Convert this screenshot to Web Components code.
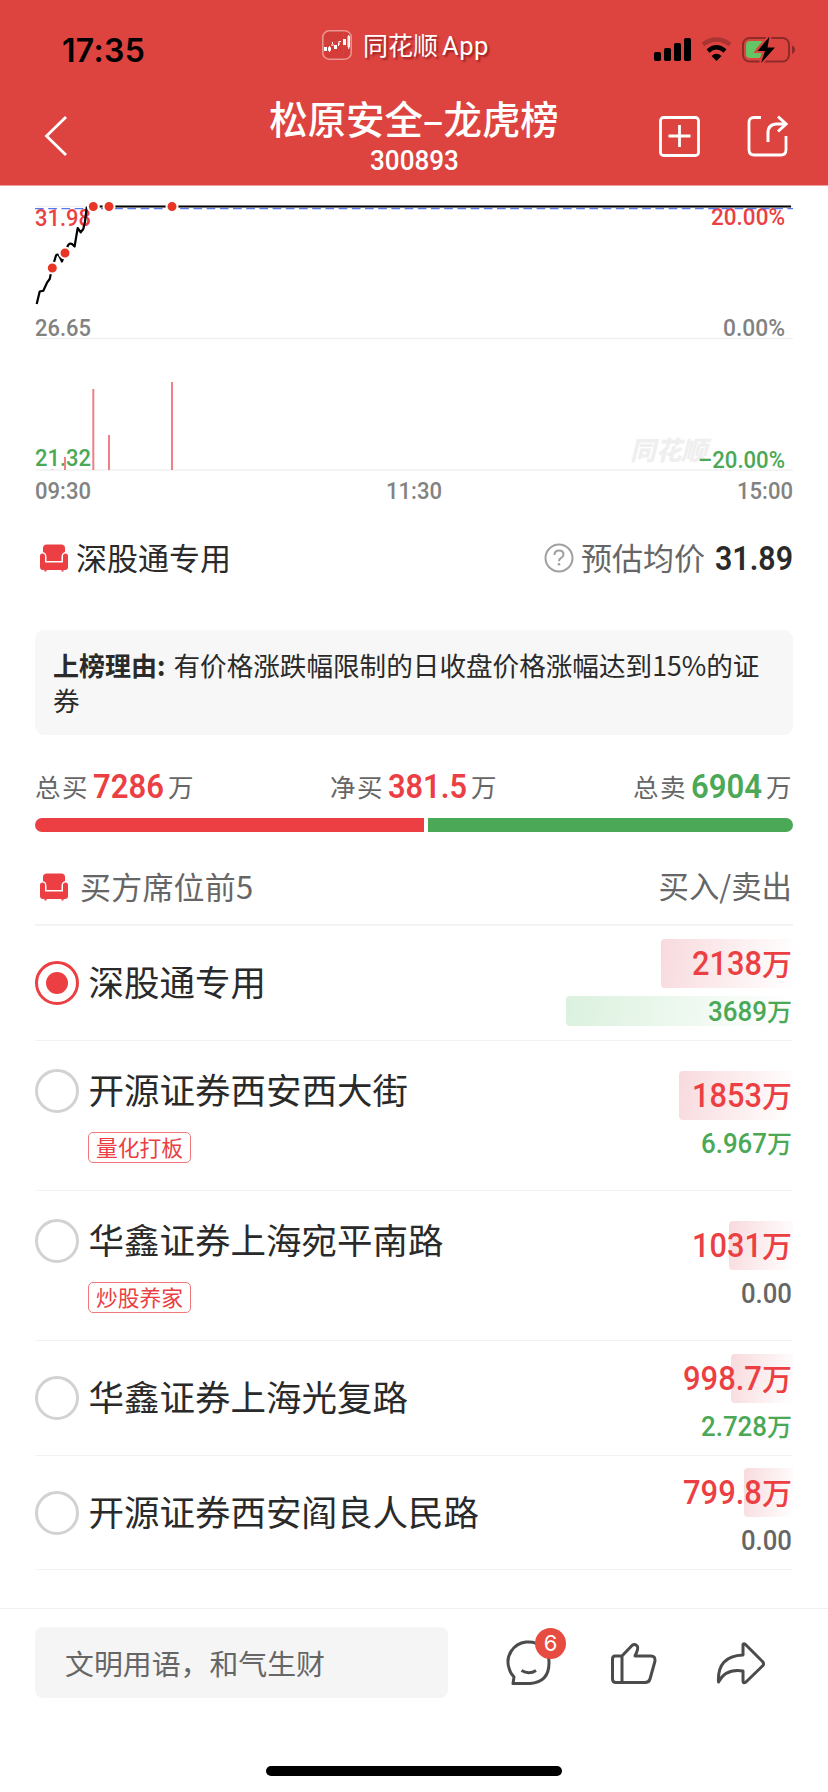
<!DOCTYPE html>
<html lang="zh-CN">
<head>
<meta charset="utf-8">
<title>松原安全–龙虎榜</title>
<style>
  :root {
    --red: #eb3f43;
    --green: #4ba856;
    --dark: #2a2a2a;
    --grey: #666;
    --line: #f3f3f3;
  }

  body {
    margin: 0;
    width: 828px;
    height: 1792px;
    overflow: hidden;
    background: #fff;
    color: var(--dark);
    font-family: "Noto Sans CJK SC", sans-serif;
  }
</style>
</head>
<body>
<app-page>
  <status-bar slot="header" time="17:35" source="同花顺"></status-bar>
  <nav-bar slot="header" heading="松原安全–龙虎榜" code="300893"></nav-bar>
  <price-chart></price-chart>
  <seat-price name="深股通专用" label="预估均价" price="31.89"></seat-price>
  <reason-box label="上榜理由:">有价格涨跌幅限制的日收盘价格涨幅达到15%的证券</reason-box>
  <trade-totals></trade-totals>
  <seat-list heading="买方席位前5" columns="买入/卖出">
    <seat-row name="深股通专用" buy="2138" buy-w="70" buy-bar="132" sell="3689" sell-w="59" sell-bar="227" checked></seat-row>
    <seat-row name="开源证券西安西大街" tag="量化打板" buy="1853" buy-w="70" buy-bar="114" sell="6.967" sell-w="66"></seat-row>
    <seat-row name="华鑫证券上海宛平南路" tag="炒股养家" buy="1031" buy-w="70" buy-bar="64" sell="0.00" sell-w="51"></seat-row>
    <seat-row name="华鑫证券上海光复路" buy="998.7" buy-w="79" buy-bar="62" sell="2.728" sell-w="66"></seat-row>
    <seat-row name="开源证券西安阎良人民路" buy="799.8" buy-w="79" buy-bar="49" sell="0.00" sell-w="51"></seat-row>
  </seat-list>
  <comment-bar slot="footer" placeholder="文明用语，和气生财" count="6"></comment-bar>
</app-page>

<script>
// Number scaled to a given width; the box is as high as its digits
class FitText extends HTMLElement {
    connectedCallback() {
        this.attachShadow({ mode: 'open' });
        const size = Number(this.getAttribute('size'));
        const w = Number(this.getAttribute('w'));
        const h = Math.round(size * 0.711);
        this.shadowRoot.innerHTML = `
        <style>
        :host { display: inline-block; line-height: 0; letter-spacing: 0; }
        svg { overflow: visible; vertical-align: baseline; }
        text { font-family: Roboto, sans-serif; fill: currentColor; }
        </style>
        <svg width="${w}" height="${h}"><text x="0" y="0" font-size="${size}" font-weight="${this.getAttribute('weight') || 500}">${this.getAttribute('text')}</text></svg>
        `
        const text = this.shadowRoot.querySelector('text');
        const scale = w / (text.getComputedTextLength() || w);
        text.setAttribute('transform', `translate(0 ${h}) scale(${scale} 1)`);
    }
}

class SofaIcon extends HTMLElement {
    constructor() {
        super();
        this.attachShadow({ mode: 'open' });
        this.shadowRoot.innerHTML = `
        <style>
        :host { display: block; width: 28px; height: 28px; color: var(--red); }
        svg { display: block; }
        </style>
        <svg width="28" height="28" viewBox="0 0 28 28" fill="currentColor">
          <path d="M3 8V4Q3 .5 7 .5H21Q25 .5 25 4V8Q21.500 9 21.500 13V17H6.500V13Q6.500 9 3 8Z"/>
          <path d="M0 12Q0 9.500 2.500 9.500Q5 9.500 5 12V18.500H23V12Q23 9.500 25.500 9.500Q28 9.500 28 12V23Q28 26 25 26H23.500V27.500H21.500V26H6.500V27.500H4.500V26H3Q0 26 0 23Z"/>
        </svg>
        `
    }
}

class AppPage extends HTMLElement {
    constructor() {
        super();
        this.attachShadow({ mode: 'open' });
        this.shadowRoot.innerHTML = `
        <style>
        :host { display: flex; flex-direction: column; height: 1792px; }
        header { flex: none; height: 185px; background: #dd4440; border-bottom: 1px solid #ee9f9e; }
        main { flex: 1; display: flex; flex-direction: column; }
        footer { flex: none; }
        </style>
        <header><slot name="header"></slot></header>
        <main><slot></slot></main>
        <footer><slot name="footer"></slot></footer>
        `
    }
}

class StatusBar extends HTMLElement {
    connectedCallback() {
        this.attachShadow({ mode: 'open' });
        this.shadowRoot.innerHTML = `
        <style>
        :host { display: flex; align-items: center; box-sizing: border-box; height: 90px; padding: 0 33px 0 62px; }
        .time { width: 260px; font: 600 32px/40px Inter, sans-serif; color: #000; padding-top: 11px; letter-spacing: .3px; }
        .app { display: flex; flex: 1; align-items: center; gap: 11px; color: #fff; font-size: 25px; line-height: 30px; text-shadow: 2px 2px 2px rgba(90, 0, 0, .5); }
        .app span { white-space: nowrap; }
        .app i { font: 25.500px Roboto, sans-serif; margin-left: 4px; letter-spacing: .5px; }
        .right { padding-top: 9px; }
        svg { display: block; }
        </style>
        <div class="time">${this.getAttribute('time')}</div>
        <div class="app">
          <svg width="30" height="30" viewBox="0 0 30 30">
            <rect x=".8" y=".8" width="28.400" height="28.400" rx="6.500" fill="#d33c38" stroke="#ea9590" stroke-width="1.600"/>
            <path d="M21.500 1V29M1 12H29" stroke="#c9504c" stroke-width=".5"/>
            <path d="M2 17H5V21H2ZM12 15H15V19H12ZM21 9H24V15H21ZM10 12H11V14H10ZM16 13H17V16H16ZM17 11H19V12H17Z" fill="#fff"/>
            <path d="M6.500 17.500H8.500V20.500H6.500ZM7.500 16V22M26 6.500H27.500V17H26ZM26.700 5V19M9 15H12M17 15V11" fill="none" stroke="#fff"/>
          </svg>
          <span>${this.getAttribute('source')}<i>App</i></span>
        </div>
        <svg class="right" width="142" height="28" viewBox="652 36 142 28">
          <g>
            <rect x="653" y="52" width="7" height="9" rx="1.800"/>
            <rect x="663" y="48" width="7" height="13" rx="1.800"/>
            <rect x="673" y="43" width="7" height="18" rx="1.800"/>
            <rect x="683" y="38" width="7" height="23" rx="1.800"/>
          </g>
          <path d="M702 44.500Q715.500 34.500 729 44.500" fill="none" stroke="#a93430" stroke-width="4.500"/>
          <path d="M707 51Q715.500 43.500 724 51" fill="none" stroke="#000" stroke-width="4.500"/>
          <path d="M710.500 56Q715.500 51.500 720.500 56L715.500 61Z"/>
          <rect x="742" y="38" width="46" height="23.500" rx="6.500" fill="none" stroke="#8d2b29" stroke-width="2"/>
          <path d="M791 45.500Q794 46.500 794 49.500T791 54Z" fill="#8d2b29"/>
          <path d="M749 41H762L755 49Q754 52 757 52.500H761L759 58H749Q745 58 745 54V45Q745 41 749 41Z" fill="#65c466"/>
          <path d="M768.500 36.500L756.500 51H764L760 63L774 47.500H766.500Z" stroke="#dd4440" stroke-width="4"/>
          <path d="M768.500 36.500L756.500 51H764L760 63L774 47.500H766.500Z"/>
        </svg>
        `
    }
}

class NavBar extends HTMLElement {
    connectedCallback() {
        this.attachShadow({ mode: 'open' });
        this.shadowRoot.innerHTML = `
        <style>
        :host { display: grid; grid-template-columns: 1fr auto 1fr; height: 95px; padding: 0 40px 0 44px; color: #fff; }
        .back { padding-top: 26px; }
        .title { display: flex; flex-direction: column; align-items: center; margin-left: -4px; }
        .title h1 { margin: 4px 0 0; font-size: 38.400px; line-height: 46px; font-weight: 500; white-space: nowrap; }
        .title fit-text { margin-top: 10px; }
        .tools { display: flex; justify-content: flex-end; gap: 47px; padding-top: 25px; }
        svg { display: block; fill: none; stroke: #fff; stroke-width: 2.800; }
        </style>
        <div class="back"><svg width="24" height="40" viewBox="0 0 24 40"><path d="M22 1L2.500 20L22 39"/></svg></div>
        <div class="title"><h1>${this.getAttribute('heading')}</h1><fit-text text="${this.getAttribute('code')}" w="89" size="28"></fit-text></div>
        <div class="tools">
          <svg width="41" height="42" viewBox="0 0 41 42"><rect x="1.500" y="2.500" width="38" height="38" rx="3"/><path d="M20.500 10V32M9.500 21H31.500"/></svg>
          <svg width="41" height="42" viewBox="0 0 41 42"><path d="M14 2.500H7Q2 2.500 2 7.500V34.500Q2 40 7 40H34Q39 40 39 34.500V21"/><path d="M21 27V18Q21 9 30 9H38M31 1.500L39 9L31 16.500" stroke-width="3"/></svg>
        </div>
        `
    }
}

class PriceChart extends HTMLElement {
    constructor() {
        super();
        this.attachShadow({ mode: 'open' });
        const dots = [[52.3, 268], [65, 253], [93.3, 206.5], [109, 206.5], [172, 206.5]];
        const volumes = [[52.3, 469.5], [65, 457], [93.3, 389], [109, 435], [172, 382]];
        const labels = [
            [35, 226, 56, '31.98', 'up'],
            [35, 336, 56, '26.65', ''],
            [35, 466, 56, '21.32', 'down'],
            [711, 225, 74, '20.00%', 'up'],
            [723, 336, 62, '0.00%', ''],
            [698, 468, 87, '–20.00%', 'down'],
        ];
        this.shadowRoot.innerHTML = `
        <style>
        :host { display: block; height: 322px; }
        svg { display: block; }
        text { font: 500 24px Roboto, sans-serif; fill: #828282; }
        .up { fill: var(--red); }
        .down { fill: var(--green); }
        .mark { font: 900 italic 26px "Noto Sans CJK SC", sans-serif; fill: #efefef; }
        .times { display: flex; justify-content: space-between; padding: 6px 35px 0 35px; color: #828282; }
        </style>
        <svg width="828" height="290" viewBox="0 186 828 290">
          <path d="M36 206.500H793M36 338.500H793M36 470H793" stroke="#f1f1f1" stroke-width="1.500"/>
          <text class="mark" x="630" y="460" textLength="77" lengthAdjust="spacingAndGlyphs">同花顺</text>
          ${labels.map(([x, y, w, text, cls]) => `<text class="${cls}" x="${x}" y="${y}" textLength="${w}" lengthAdjust="spacingAndGlyphs">${text}</text>`).join('')}
          ${volumes.map(([x, y]) => `<path d="M${x} ${y}V470" stroke="#ec8286" stroke-width="2"/>`).join('')}
          <path d="M35 208.700H793" stroke="#5778ee" stroke-width="1.300" stroke-dasharray="8.700 4.500"/>
          <path d="M36.700 304L39.700 291.500L43.300 290.700L47 282.700L49.700 279L50.700 274.500L52.300 268L54.500 260.500L56 255.500Q57.500 253.500 59 255.500L62 261.500L65 253L67.700 246Q69.500 242.500 72 244L74.600 246.500L76 238L77.700 228L80.700 232.300L83.300 229L85 221.500L86.700 207.500L93 206.500H791" fill="none" stroke="#000" stroke-width="2.200" stroke-linejoin="round"/>
          ${dots.map(([x, y]) => `<circle cx="${x}" cy="${y}" r="5.500" fill="#e93526" stroke="#fff" stroke-width="2"/>`).join('')}
        </svg>
        <div class="times">
          <fit-text text="09:30" w="56" size="24"></fit-text>
          <fit-text text="11:30" w="56" size="24"></fit-text>
          <fit-text text="15:00" w="56" size="24"></fit-text>
        </div>
        `
    }
}

class SeatPrice extends HTMLElement {
    connectedCallback() {
        this.attachShadow({ mode: 'open' });
        this.shadowRoot.innerHTML = `
        <style>
        :host { display: flex; align-items: center; height: 100px; padding: 0 35px 0 40px; font-size: 31px; line-height: 40px; }
        .name { margin-left: 8px; flex: 1; }
        .label { color: var(--grey); margin: 0 10px 0 7px; }
        .name, .label { padding-bottom: 3px; }
        </style>
        <sofa-icon></sofa-icon>
        <span class="name">${this.getAttribute('name')}</span>
        <svg width="30" height="30" viewBox="0 0 30 30" fill="none" stroke="#a0a0a0" stroke-width="2">
          <circle cx="15" cy="15" r="13.500"/>
          <path d="M10.500 12Q10.500 7.500 15 7.500T19.500 11.500Q19.500 13.500 17 15Q15 16 15 18.200"/>
          <circle cx="15" cy="21.200" r="1.300" fill="#a0a0a0" stroke="none"/>
        </svg>
        <span class="label">${this.getAttribute('label')}</span>
        <fit-text text="${this.getAttribute('price')}" w="78" size="34" weight="600"></fit-text>
        `
    }
}

class ReasonBox extends HTMLElement {
    connectedCallback() {
        this.attachShadow({ mode: 'open' });
        this.shadowRoot.innerHTML = `
        <style>
        :host { display: block; box-sizing: border-box; height: 105px; margin: 22px 35px 0; padding: 17px 24px 0 18px; border-radius: 9px; background: #f7f7f7; font-size: 26.600px; line-height: 35px; }
        b { font-weight: 700; font-size: 26px; margin-right: 8px; }
        </style>
        <b>${this.getAttribute('label')}</b><slot></slot>
        `
    }
}

class TradeTotals extends HTMLElement {
    constructor() {
        super();
        this.attachShadow({ mode: 'open' });
        this.shadowRoot.innerHTML = `
        <style>
        :host { display: block; height: 117px; padding: 32px 35px 0; box-sizing: border-box; }
        .sums { display: flex; justify-content: space-between; height: 51px; font-size: 25.500px; line-height: 40px; letter-spacing: 1.500px; color: var(--grey); }
        .sums div { display: flex; align-items: baseline; gap: 4px; }
        .sums span { position: relative; top: -1px; }
        .up { color: var(--red); }
        .down { color: var(--green); }
        .ratio { display: flex; gap: 4px; height: 14px; border-radius: 7px; overflow: hidden; }
        .ratio i { background: var(--red); width: 389px; }
        .ratio i + i { background: var(--green); flex: 1; width: auto; }
        </style>
        <div class="sums">
          <div><span>总买</span><fit-text class="up" text="7286" w="71" size="34" weight="600"></fit-text><span>万</span></div>
          <div><span>净买</span><fit-text class="up" text="381.5" w="79" size="34" weight="600"></fit-text><span>万</span></div>
          <div><span>总卖</span><fit-text class="down" text="6904" w="71" size="34" weight="600"></fit-text><span>万</span></div>
        </div>
        <div class="ratio"><i></i><i></i></div>
        `
    }
}

class SeatList extends HTMLElement {
    connectedCallback() {
        this.attachShadow({ mode: 'open' });
        this.shadowRoot.innerHTML = `
        <style>
        :host { display: block; padding: 0 35px; }
        .head { display: flex; align-items: center; box-sizing: border-box; height: 74px; border-bottom: 2px solid var(--line); padding: 0 1px 2px 5px; font-size: 30.400px; color: var(--grey); }
        .head span { padding-bottom: 4px; }
        .heading { margin-left: 12px; flex: 1; font-size: 31px; letter-spacing: .2px; }
        </style>
        <div class="head"><sofa-icon></sofa-icon><span class="heading">${this.getAttribute('heading')}</span><span>${this.getAttribute('columns')}</span></div>
        <slot></slot>
        `
    }
}

class SeatRow extends HTMLElement {
    connectedCallback() {
        this.attachShadow({ mode: 'open' });
        const get = (name) => this.getAttribute(name);
        const tag = get('tag');
        const sell = get('sell');
        const zero = sell === '0.00';
        this.shadowRoot.innerHTML = `
        <style>
        :host { display: flex; align-items: center; box-sizing: border-box; height: ${tag ? 150.2 : 114.6}px; border-bottom: 1.500px solid var(--line); }
        .seat { flex: 1; display: grid; grid-template-columns: 44px 1fr; column-gap: 9px; row-gap: 19px; align-items: center; padding-top: ${tag ? 2 : 1}px; }
        .radio { box-sizing: border-box; width: 44px; height: 44px; border: 3px solid #d2d2d2; border-radius: 50%; display: grid; place-items: center; }
        :host([checked]) .radio { border-color: var(--red); }
        :host([checked]) .radio::after { content: ""; width: 22px; height: 22px; border-radius: 50%; background: var(--red); }
        .name { font-size: 35.500px; line-height: 40px; padding: 0 0 4px .5px; white-space: nowrap; }
        .tag { grid-column: 2; justify-self: start; box-sizing: border-box; width: 103px; height: 31px; border: 1px solid #f0787b; border-radius: 5px; color: var(--red); font-size: 21.800px; line-height: 28px; text-align: center; }
        .values { display: grid; justify-items: end; row-gap: 8px; padding-bottom: 1px; }
        .value { display: grid; grid-template-rows: 49px; justify-items: end; align-items: center; height: 49px; }
        .value.small { grid-template-rows: 30px; height: 30px; }
        .value > * { grid-area: 1 / 1; }
        .bar { height: 100%; border-radius: 4px 0 0 4px; background: linear-gradient(100deg, #f8dadd, #fff); }
        .small .bar { background: linear-gradient(100deg, #dbf1de, #fff); }
        .num { display: flex; align-items: baseline; font-size: 30px; line-height: 40px; font-weight: 500; color: var(--red); padding: 0 1px 3px 0; white-space: nowrap; }
        .small .num { font-size: 25px; line-height: 28px; padding-bottom: 2px; color: var(--green); }
        .small .num.zero { color: var(--grey); padding-bottom: 0; }
        </style>
        <div class="seat">
          <div class="radio"></div><div class="name">${get('name')}</div>
          ${tag ? `<div class="tag">${tag}</div>` : ''}
        </div>
        <div class="values">
          <div class="value">
            <div class="bar" style="width: ${get('buy-bar')}px"></div>
            <div class="num"><fit-text text="${get('buy')}" w="${get('buy-w')}" size="34"></fit-text>万</div>
          </div>
          <div class="value small">
            <div class="bar" style="width: ${get('sell-bar') || 0}px"></div>
            <div class="num ${zero ? 'zero' : ''}"><fit-text text="${sell}" w="${get('sell-w')}" size="28.500"></fit-text>${zero ? '' : '万'}</div>
          </div>
        </div>
        `
    }
}

class CommentBar extends HTMLElement {
    connectedCallback() {
        this.attachShadow({ mode: 'open' });
        this.shadowRoot.innerHTML = `
        <style>
        :host { display: flex; flex-direction: column; align-items: center; box-sizing: border-box; height: 184px; border-top: 1px solid #f0f0f0; }
        .row { display: flex; align-items: center; box-sizing: border-box; width: 100%; padding: 18px 62px 0 35px; }
        .input { box-sizing: border-box; width: 413px; height: 71px; padding-left: 30px; border-radius: 8px; background: #f5f5f5; color: var(--grey); font-size: 28.900px; line-height: 70px; }
        .icons { flex: 1; display: flex; justify-content: space-between; margin-left: 58px; }
        .chat { position: relative; }
        .badge { position: absolute; left: 29px; top: -12px; width: 31px; height: 31px; border-radius: 50%; background: #e64c3f; color: #fff; font: 22px/31px Inter, sans-serif; text-align: center; }
        svg { display: block; fill: none; stroke: #4b4b4b; stroke-width: 3; stroke-linejoin: round; }
        .home { width: 296px; height: 10px; margin-top: 68px; border-radius: 5px; background: #000; }
        </style>
        <div class="row">
          <div class="input">${this.getAttribute('placeholder')}</div>
          <div class="icons">
            <div class="chat">
              <svg width="46" height="46" viewBox="506 1640 46 46"><path d="M513 1683.500H530Q549 1682 549 1663A20.500 20 0 1 0 509 1668Q510 1673 514 1677Z"/><path d="M521.500 1670.500Q529 1675 536 1670.500"/></svg>
              <span class="badge">${this.getAttribute('count')}</span>
            </div>
            <svg width="48" height="46" viewBox="610 1640 48 46"><path d="M615 1656H622L632 1645.500Q635 1643 637.500 1646.500Q638.500 1649 635 1656H651Q655.500 1656 655 1661L650 1679Q649 1682.500 645 1682.500H616Q612.500 1682.500 612.500 1679V1659Q612.500 1656 615 1656ZM622 1656V1682"/></svg>
            <svg width="50" height="46" viewBox="715 1640 50 46"><path d="M742 1644.500Q742.500 1643 744.500 1644.500L762 1662Q763 1664 762 1665.500L745 1682Q742 1684 742 1681V1671Q725 1668 717.500 1682Q716 1656 742 1655Z"/></svg>
          </div>
        </div>
        <div class="home"></div>
        `
    }
}

customElements.define('fit-text', FitText);
customElements.define('sofa-icon', SofaIcon);
customElements.define('app-page', AppPage);
customElements.define('status-bar', StatusBar);
customElements.define('nav-bar', NavBar);
customElements.define('price-chart', PriceChart);
customElements.define('seat-price', SeatPrice);
customElements.define('reason-box', ReasonBox);
customElements.define('trade-totals', TradeTotals);
customElements.define('seat-list', SeatList);
customElements.define('seat-row', SeatRow);
customElements.define('comment-bar', CommentBar);
</script>
</body>
</html>
